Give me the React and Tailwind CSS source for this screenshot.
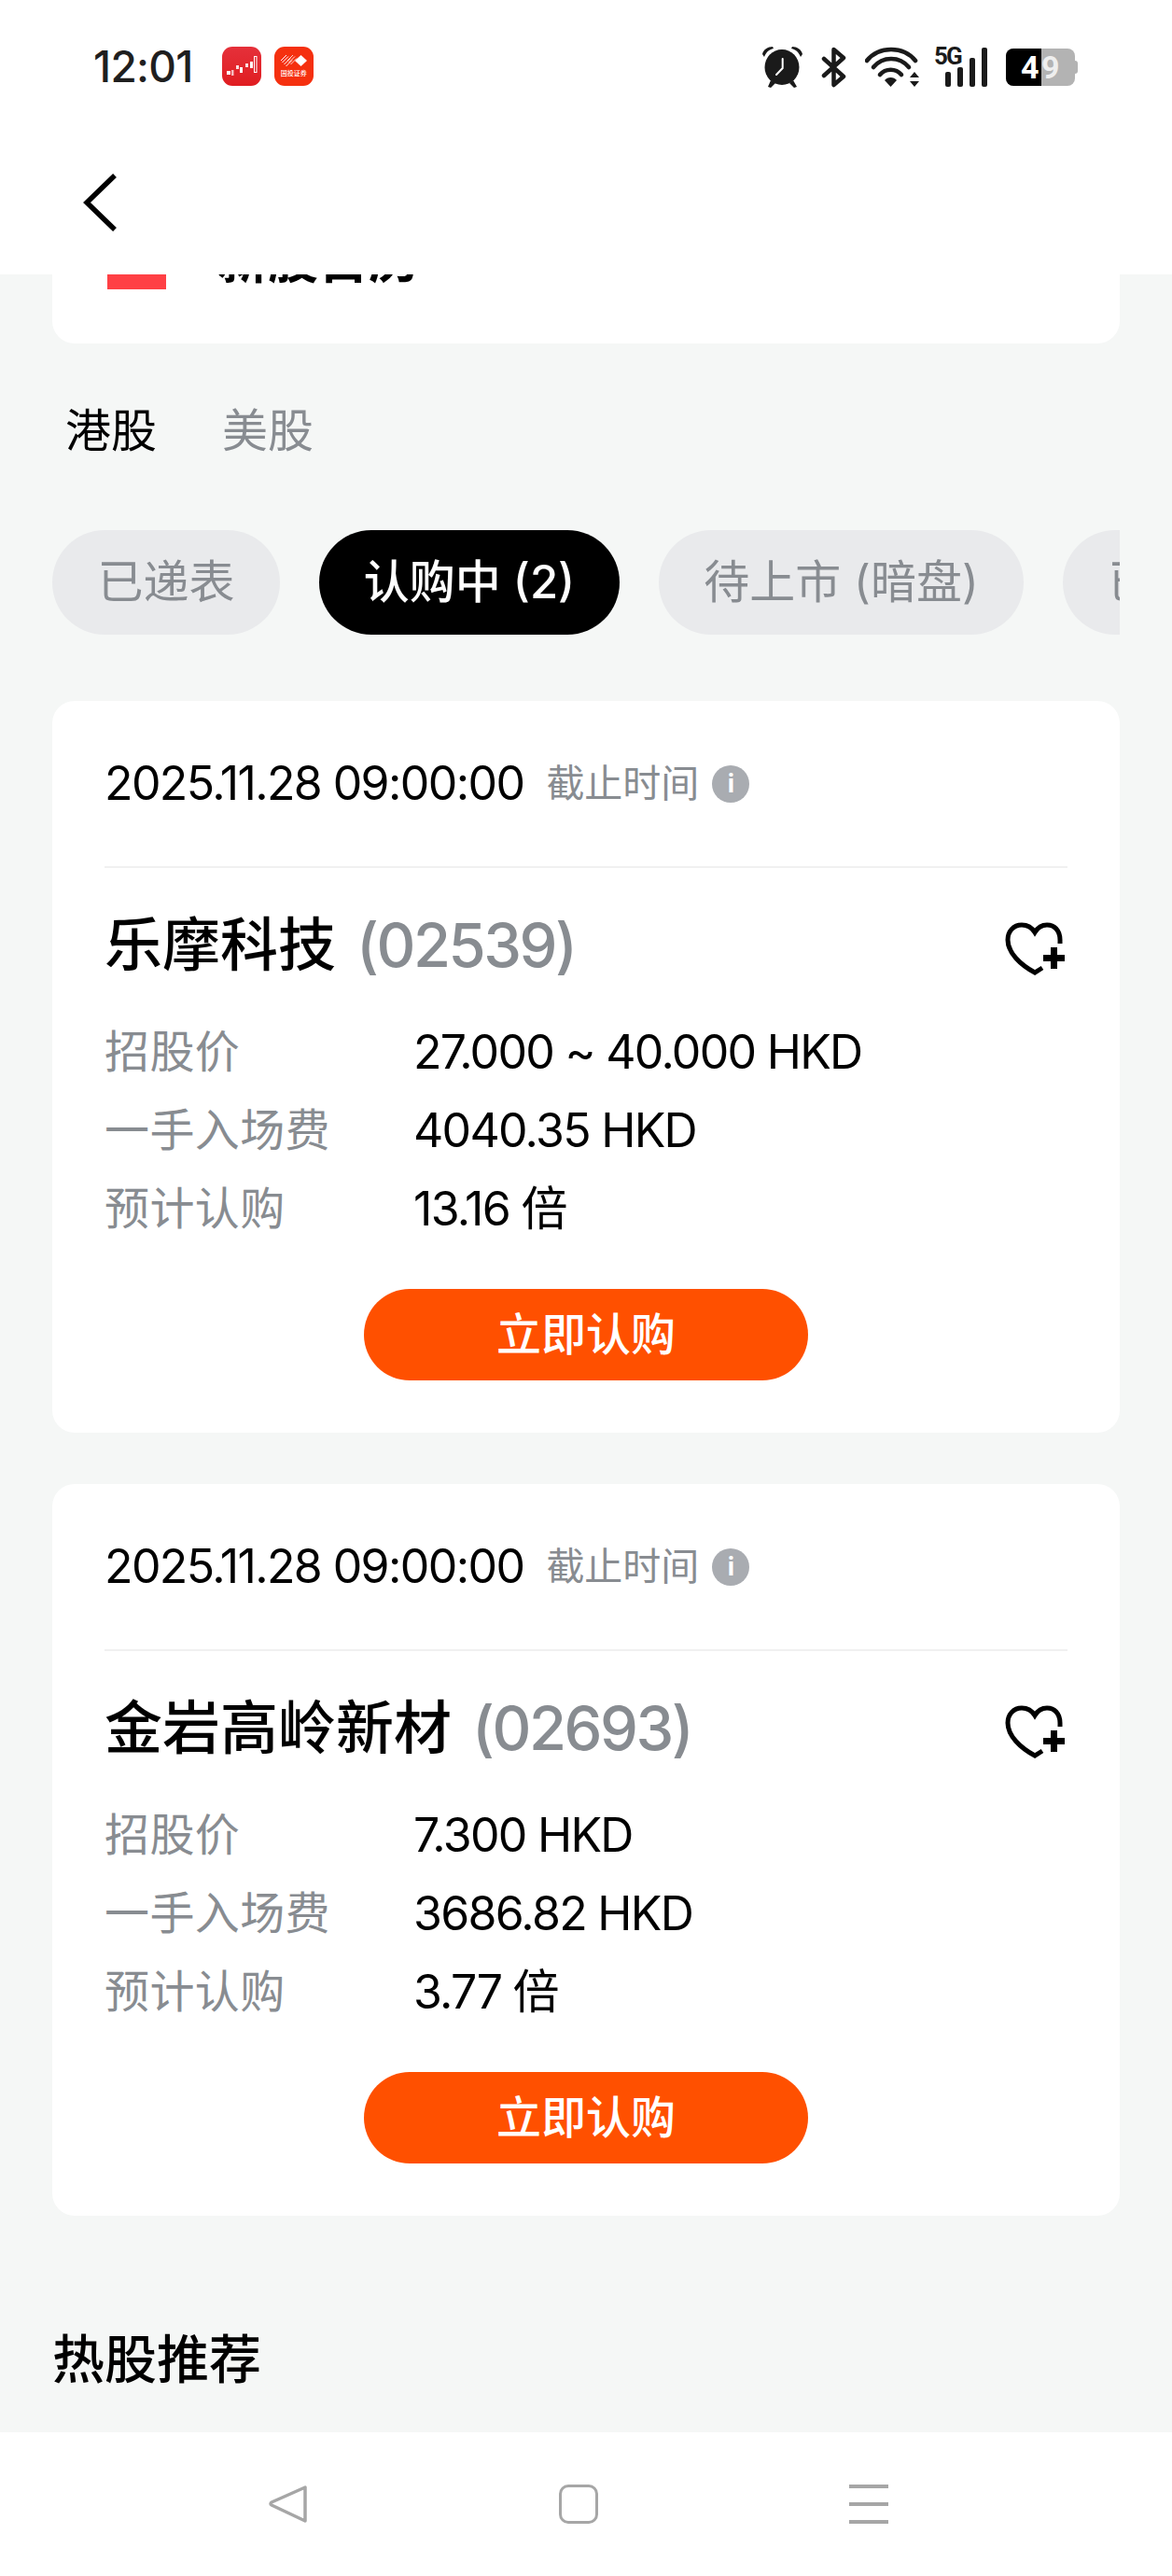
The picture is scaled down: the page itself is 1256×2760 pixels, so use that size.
const font = "font-['Inter','Noto_Sans_CJK_SC',sans-serif]";

const Alarm = () => (
  <svg width="43" height="44" viewBox="0 0 43 44" fill="#1a1a1a">
    <path d="M0 8 C1 3 6 0 11 0 L12 2 C7 3 4 6 2 11 Z" />
    <path d="M43 8 C42 3 37 0 32 0 L31 2 C36 3 39 6 41 11 Z" />
    <path d="M9 36 L6 43 L9 44 L14 39 Z M33 36 L37 43 L34 44 L29 39 Z" />
    <ellipse cx="21" cy="22" rx="18.5" ry="19" />
    <path d="M21.7 13 V23 L15 30" stroke="#fff" strokeWidth="2" fill="none" strokeLinecap="round" />
  </svg>
);

const Bluetooth = () => (
  <svg width="27" height="44" viewBox="0 0 27 44" fill="none" stroke="#1a1a1a" strokeWidth="4.5" strokeLinecap="round" strokeLinejoin="round">
    <path d="M3 13 L24 32 L13.5 41 V3 L24 12 L3 31" />
  </svg>
);

const Wifi = () => (
  <svg width="58" height="44" viewBox="0 0 58 44" fill="none" stroke="#1a1a1a" strokeWidth="4.6" strokeLinecap="round" className="-mr-[3px]">
    <path d="M2 15 C15 -1 41 -1 54 15" />
    <path d="M9 22 C19 10 37 10 47 22" />
    <path d="M16 30 C22 23 33 23 39 30" />
    <path d="M21 36 C24 32 31 32 34 36 L27.5 43 Z" fill="#1a1a1a" stroke="none" />
    <path d="M48 33 L53 27 L58 33 Z M48 37 L53 43 L58 37 Z" fill="#1a1a1a" stroke="none" />
  </svg>
);

const Signal = () => (
  <div className="relative w-[56px] h-[44px] flex items-end justify-end gap-[7px] pb-[1px]">
    <span className="absolute -left-[1px] -top-[3px] text-[26px] leading-[26px] font-bold tracking-[-2px] text-[#1a1a1a] font-['Roboto',sans-serif]">5G</span>
    <div className="w-[6px] h-[16px] rounded-[2px] bg-[#1a1a1a]" />
    <div className="w-[6px] h-[21px] rounded-[2px] bg-[#1a1a1a]" />
    <div className="w-[6px] h-[31px] rounded-[2px] bg-[#1a1a1a]" />
    <div className="w-[6px] h-[42px] rounded-[2px] bg-[#1a1a1a]" />
  </div>
);

const Battery = () => (
  <div className="flex items-center">
    <div className="relative w-[74px] h-[40px] rounded-[8px] overflow-hidden bg-[#b3b3b3]">
      <div className="absolute left-0 top-0 bottom-0 w-[38px] bg-black" />
      <span className="absolute left-[16px] top-0 text-[34px] leading-[40px] font-bold text-white font-['Roboto',sans-serif]">4</span>
      <span className="absolute left-[38px] top-0 text-[34px] leading-[40px] font-bold text-[#eeeeee] font-['Roboto',sans-serif]">9</span>
    </div>
    <div className="w-[3px] h-[14px] rounded-r-[3px] bg-[#b3b3b3]" />
  </div>
);

const ChartAppIcon = () => (
  <div className="w-[42px] h-[42px] rounded-[11px] bg-gradient-to-b from-[#e5303a] to-[#e01c20] overflow-hidden">
    <svg width="42" height="42" viewBox="0 0 42 42" fill="#fff">
      <rect x="5" y="26" width="4" height="4" />
      <rect x="10" y="25" width="2.5" height="6" opacity="0.7" />
      <rect x="15" y="20" width="3" height="4" opacity="0.85" />
      <rect x="19" y="22" width="3" height="6" />
      <rect x="25" y="18" width="3" height="4" opacity="0.85" />
      <rect x="30" y="16" width="3" height="7" />
      <rect x="34.5" y="10.5" width="2.5" height="17" fill="none" stroke="#fff" strokeWidth="1" />
    </svg>
  </div>
);

const BrokerAppIcon = () => (
  <div className="w-[42px] h-[42px] rounded-[11px] bg-[#f5300f] flex flex-col items-center pt-[9px]">
    <svg width="28" height="12" viewBox="0 0 28 12" fill="none" stroke="#fff" strokeWidth="1">
      <path d="M0 6 L6 0 M1.5 8 L8 1.5 M3.5 10 L10 3.5 M5.5 12 L12 5.5" />
      <path d="M7 6 L13 0 M8.5 8 L15 1.5 M10.5 10 L17 3.5" opacity="0.8" />
      <path d="M21.5 0 L28 6 L21.5 12 L15 6 Z" fill="#fff" stroke="none" />
    </svg>
    <span className="mt-[3px] text-[7px] leading-[8px] text-white font-['Noto_Sans_CJK_SC',sans-serif] font-medium">国投证券</span>
  </div>
);

const StatusBar = () => (
  <div className="h-[94px] pt-[50px] pl-[100px] pr-[101px] flex items-start justify-between">
    <div className="flex items-center gap-[31px] h-[42px]">
      <span className="text-[46px] leading-[42px] font-medium tracking-[-0.7px] text-[#1f1f1f]">12:01</span>
      <div className="flex gap-[14px]">
        <ChartAppIcon />
        <BrokerAppIcon />
      </div>
    </div>
    <div className="flex items-center gap-[20px] h-[44px]">
      <Alarm />
      <Bluetooth />
      <Wifi />
      <Signal />
      <Battery />
    </div>
  </div>
);

const Row = ({ label, value }) => (
  <div className="flex h-[84px] items-center">
    <span className="w-[331px] text-[48px] tracking-[0.4px] text-[#888c91]">{label}</span>
    <span className="text-[50px] text-black tracking-[-1.7px]">{value}</span>
  </div>
);

const StockCard = ({ name, code, rows }) => (
  <div className="bg-white rounded-[24px] h-[784px] px-[56px] flex flex-col">
    <div className="h-[179px] shrink-0 flex items-center border-b-2 border-[#f0f0f0]">
      <span className="text-[50px] text-black tracking-[-1.6px]">2025.11.28 09:00:00</span>
      <span className="ml-[24px] text-[41px] text-[#888c91]">截止时间</span>
      <div className="ml-[14px] w-[40px] h-[40px] rounded-full bg-[#a9acb1] flex items-center justify-center text-white text-[27px] font-bold leading-none">i</div>
    </div>
    <div className="flex items-center justify-between h-[155px] shrink-0 pt-[11px]">
      <div className="flex items-center font-medium text-black whitespace-nowrap">
        <span className="text-[62px] leading-[80px]">{name}</span>
        <span className="ml-[22px] text-[65px] leading-[80px] tracking-[-2.5px] text-[#888c91]">({code})</span>
      </div>
      <svg width="64" height="57" viewBox="0 0 64 57" fill="none" stroke="#000" strokeWidth="5" className="mr-[3px] mt-[6px]">
        <path d="M59 23 V19 C59 9 53 3 45 3 C39 3 35 6 32 11 C29 6 25 3 18 3 C9 3 3 10 3 19 C3 33 17 46 32 54 L40 49" />
        <path d="M41 38.5 H64 M52.5 27 V50" strokeWidth="7" />
      </svg>
    </div>
    <div className="flex flex-col">
      {rows.map((r) => (
        <Row key={r[0]} label={r[0]} value={r[1]} />
      ))}
    </div>
    <div className="flex justify-center mt-[44px]">
      <button className="w-[476px] h-[98px] rounded-full bg-[#ff5000] text-white text-[48px] font-medium">立即认购</button>
    </div>
  </div>
);

const Pill = ({ children, active, width }) => (
  <div className={`shrink-0 h-[112px] rounded-full flex items-center justify-center text-[49px] whitespace-nowrap ${width} ${active ? "bg-black text-white font-medium" : "bg-[#e9eaec] text-[#888c91]"}`}>
    {children}
  </div>
);

export default function App() {
  return (
    <div className={`${font} w-[1256px] h-[2760px] bg-[#f5f7f6] flex flex-col overflow-hidden`}>
      <header className="bg-white h-[294px] shrink-0">
        <StatusBar />
        <svg width="36" height="62" viewBox="0 0 36 62" fill="none" stroke="#000" strokeWidth="5.5" className="ml-[89px] mt-[92px]">
          <path d="M34 2 L4 31 L34 60" />
        </svg>
      </header>

      <main className="flex-1 px-[56px] overflow-hidden">
        <div className="bg-white rounded-b-[24px] h-[74px] overflow-hidden flex pl-[59px]">
          <div className="w-[63px] h-[16px] bg-[#ff4045]" />
          <span className="ml-[55px] -mt-[41px] text-[54px] leading-[54px] font-bold text-black h-fit">新股日历</span>
        </div>

        <div className="flex gap-[70px] pl-[14px] mt-[60px] text-[49px] leading-[68px]">
          <span className="text-black">港股</span>
          <span className="text-[#888c91]">美股</span>
        </div>

        <div className="flex gap-[42px] mt-[72px] overflow-hidden">
          <Pill width="w-[244px]">已递表</Pill>
          <Pill active width="w-[322px]">认购中 (2)</Pill>
          <Pill width="w-[391px]">待上市 (暗盘)</Pill>
          <Pill width="w-[244px]">已上市</Pill>
        </div>

        <div className="flex flex-col gap-[55px] mt-[71px]">
          <StockCard
            name="乐摩科技"
            code="02539"
            rows={[["招股价", "27.000 ~ 40.000 HKD"], ["一手入场费", "4040.35 HKD"], ["预计认购", "13.16 倍"]]}
          />
          <StockCard
            name="金岩高岭新材"
            code="02693"
            rows={[["招股价", "7.300 HKD"], ["一手入场费", "3686.82 HKD"], ["预计认购", "3.77 倍"]]}
          />
        </div>

        <h2 className="mt-[120px] text-[56px] leading-[68px] font-medium text-black">热股推荐</h2>
      </main>

      <nav className="bg-white h-[154px] shrink-0 flex items-start pt-[56px] pl-[288px] gap-[269px]">
        <svg width="42" height="42" viewBox="0 0 42 42" fill="none" stroke="#a6a6a6" strokeWidth="3.5" strokeLinejoin="round">
          <path d="M39 3 V39 L3 22 Q1 21 3 19 Z" />
        </svg>
        <div className="w-[42px] h-[42px] rounded-[10px] border-[3px] border-[#a6a6a6]" />
        <div className="w-[42px] h-[42px] flex flex-col justify-between">
          <div className="h-[4px] bg-[#a6a6a6]" />
          <div className="h-[4px] bg-[#a6a6a6]" />
          <div className="h-[4px] bg-[#a6a6a6]" />
        </div>
      </nav>
    </div>
  );
}
